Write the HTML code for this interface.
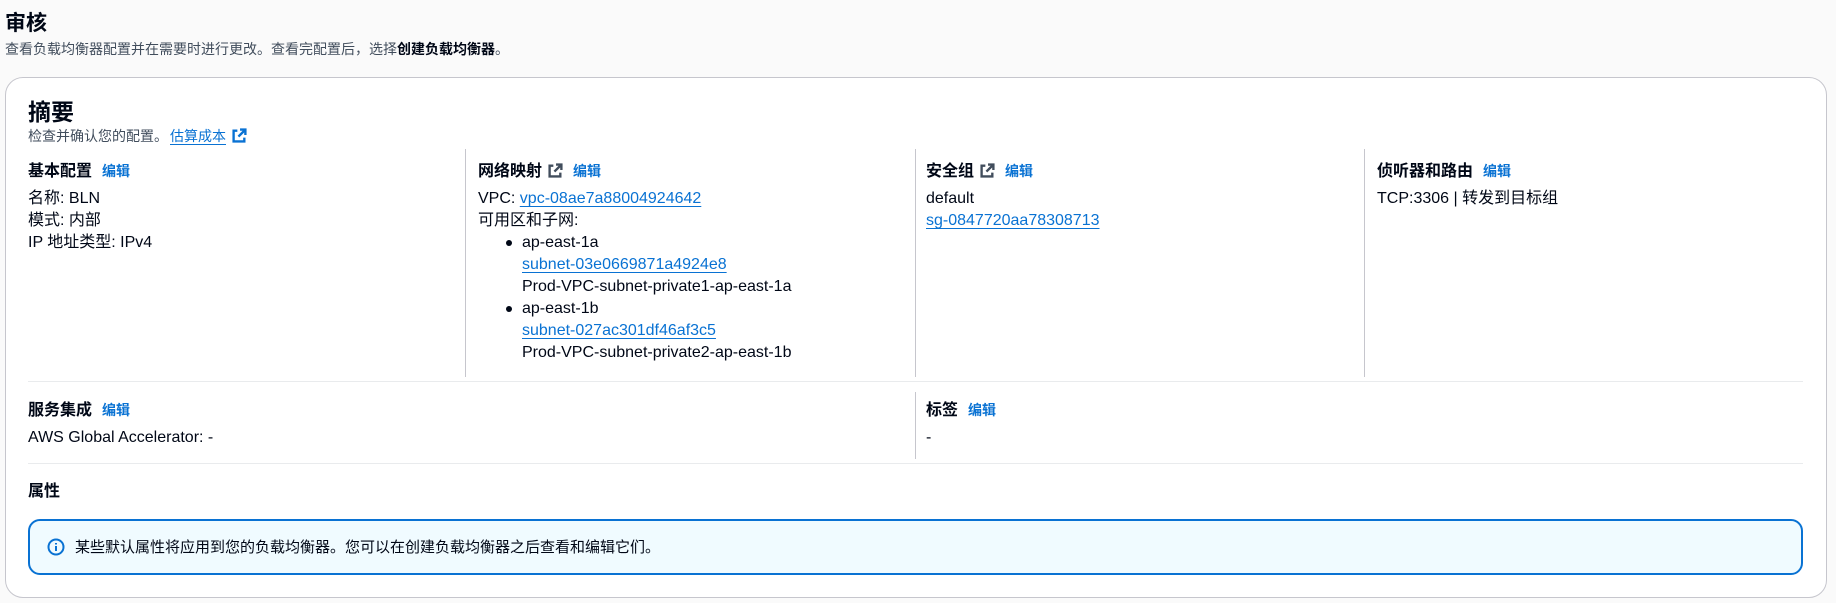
<!DOCTYPE html>
<html><head><meta charset="utf-8"><style>
*{margin:0;padding:0;box-sizing:border-box}
body{width:1836px;height:603px;background:#fafafa;font-family:"Liberation Sans","Noto Sans CJK SC",sans-serif;color:#000716;position:relative;overflow:hidden;font-size:16px}
.a{position:absolute;white-space:nowrap}
h1{font-size:21px;font-weight:bold}
.card{position:absolute;left:5px;top:77px;width:1822px;height:521px;background:#fff;border:1px solid #c6c6cd;border-radius:18px}
a{color:#0972d3;text-decoration:underline;text-underline-offset:3px}
.e{color:#0972d3;font-size:14px;font-weight:bold;margin-left:10px}
.h{font-weight:bold;font-size:16px}
.vl{position:absolute;width:1px;background:#c6c6cd}
.hl{position:absolute;height:1px;background:#e9ebed;left:28px;width:1775px}
.col{position:absolute;line-height:22px}
.ext{display:inline-block;vertical-align:-2px;margin-left:6px}
ul{list-style:none}
li{position:relative;padding-left:44px}
li:before{content:"";position:absolute;left:28px;top:8px;width:6px;height:6px;border-radius:50%;background:#000716}
</style></head><body>
<div class="a" style="left:5px;top:7px"><h1>审核</h1></div>
<div class="a" style="left:5px;top:39px;font-size:14px;color:#414d5c">查看负载均衡器配置并在需要时进行更改。查看完配置后，选择<b style="color:#000716">创建负载均衡器</b>。</div>
<div class="card"></div>
<div class="a" style="left:28px;top:93px;font-size:23px;font-weight:bold">摘要</div>
<div class="a" style="left:28px;top:126px;font-size:14px;color:#414d5c">检查并确认您的配置。<a href="#" style="margin-left:2px">估算成本</a><svg class="ext" width="15" height="15" viewBox="0 0 14 14"><path d="M7.5 1.5h5v5M12.5 1.5L6 8M5 2.5H1.5v10h10V9" fill="none" stroke="#0972d3" stroke-width="2.2"/></svg></div>

<div class="vl" style="left:465px;top:149px;height:228px"></div>
<div class="vl" style="left:915px;top:149px;height:228px"></div>
<div class="vl" style="left:1364px;top:149px;height:228px"></div>

<div class="col" style="left:28px;top:160px"><div class="h">基本配置<span class="e">编辑</span></div><div style="margin-top:5px">名称: BLN<br>模式: 内部<br>IP 地址类型: IPv4</div></div>

<div class="col" style="left:478px;top:160px"><div class="h">网络映射<svg class="ext" width="15" height="15" viewBox="0 0 14 14"><path d="M7.5 1.5h5v5M12.5 1.5L6 8M5 2.5H1.5v10h10V9" fill="none" stroke="#414d5c" stroke-width="2.2"/></svg><span class="e">编辑</span></div>
<div style="margin-top:5px">VPC: <a href="#">vpc-08ae7a88004924642</a><br>可用区和子网:
<ul><li>ap-east-1a<br><a href="#">subnet-03e0669871a4924e8</a><br>Prod-VPC-subnet-private1-ap-east-1a</li>
<li>ap-east-1b<br><a href="#">subnet-027ac301df46af3c5</a><br>Prod-VPC-subnet-private2-ap-east-1b</li></ul></div></div>

<div class="col" style="left:926px;top:160px"><div class="h">安全组<svg class="ext" width="15" height="15" viewBox="0 0 14 14"><path d="M7.5 1.5h5v5M12.5 1.5L6 8M5 2.5H1.5v10h10V9" fill="none" stroke="#414d5c" stroke-width="2.2"/></svg><span class="e">编辑</span></div><div style="margin-top:5px">default<br><a href="#">sg-0847720aa78308713</a></div></div>

<div class="col" style="left:1377px;top:160px"><div class="h">侦听器和路由<span class="e">编辑</span></div><div style="margin-top:5px">TCP:3306 | 转发到目标组</div></div>

<div class="hl" style="top:381px"></div>
<div class="vl" style="left:915px;top:392px;height:67px"></div>
<div class="col" style="left:28px;top:399px"><div class="h">服务集成<span class="e">编辑</span></div><div style="margin-top:5px">AWS Global Accelerator: -</div></div>
<div class="col" style="left:926px;top:399px"><div class="h">标签<span class="e">编辑</span></div><div style="margin-top:5px">-</div></div>
<div class="hl" style="top:463px"></div>
<div class="col" style="left:28px;top:481px"><div class="h">属性</div></div>
<div class="a" style="left:28px;top:519px;width:1775px;height:56px;border:2px solid #0972d3;border-radius:12px;background:#f0fbff"></div>
<svg class="a" style="left:47px;top:538px" width="18" height="18" viewBox="0 0 18 18"><circle cx="9" cy="9" r="7.5" fill="none" stroke="#0972d3" stroke-width="2"/><path d="M9 8v5M9 5v1.5" stroke="#0972d3" stroke-width="2"/></svg>
<div class="a" style="left:75px;top:536px;font-size:15px">某些默认属性将应用到您的负载均衡器。您可以在创建负载均衡器之后查看和编辑它们。</div>
</body></html>
